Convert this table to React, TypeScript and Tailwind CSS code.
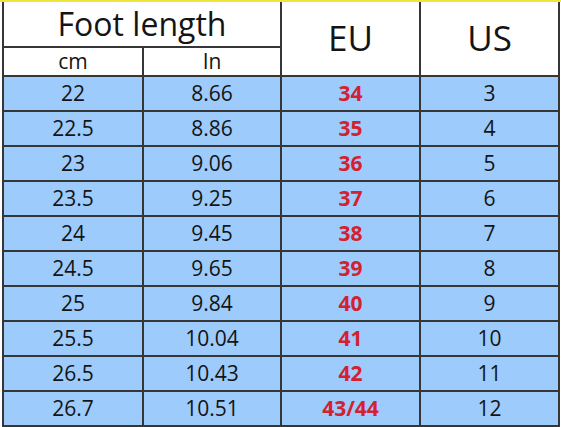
import React from "react";

// Shoe size conversion chart
const rows = [
  { cm: "22", inch: "8.66", eu: "34", us: "3" },
  { cm: "22.5", inch: "8.86", eu: "35", us: "4" },
  { cm: "23", inch: "9.06", eu: "36", us: "5" },
  { cm: "23.5", inch: "9.25", eu: "37", us: "6" },
  { cm: "24", inch: "9.45", eu: "38", us: "7" },
  { cm: "24.5", inch: "9.65", eu: "39", us: "8" },
  { cm: "25", inch: "9.84", eu: "40", us: "9" },
  { cm: "25.5", inch: "10.04", eu: "41", us: "10" },
  { cm: "26.5", inch: "10.43", eu: "42", us: "11" },
  { cm: "26.7", inch: "10.51", eu: "43/44", us: "12" },
];

const cell = "flex items-center justify-center bg-[#9dcbfb] text-[21px] text-[#141414]";

export default function App() {
  return (
    <div
      className="w-[561px] h-[427px] bg-white overflow-hidden flex flex-col"
      style={{ fontFamily: '"Open Sans", "Noto Sans", sans-serif' }}
    >
      <div className="h-[2px] bg-[#f2e43c]" />
      <div className="ml-[2px] w-[558px] grid grid-cols-[138px_136px_137px_137px] grid-rows-[44px_27px_repeat(10,33px)] gap-[2px] bg-[#363636] border-x-2 border-b-2 border-[#363636]">
        <div className="col-span-2 bg-white flex items-center justify-center text-[32px] text-[#141414]">
          Foot length
        </div>
        <div className="row-span-2 bg-white flex items-center justify-center text-[35px] text-[#141414]">
          EU
        </div>
        <div className="row-span-2 bg-white flex items-center justify-center text-[35px] text-[#141414]">
          US
        </div>
        <div className="bg-white flex items-center justify-center text-[21px] text-[#141414]">cm</div>
        <div className="bg-white flex items-center justify-center text-[21px] text-[#141414]">In</div>

        {rows.map((r) => (
          <React.Fragment key={r.cm}>
            <div className={cell}>{r.cm}</div>
            <div className={cell}>{r.inch}</div>
            <div className="flex items-center justify-center bg-[#9dcbfb] text-[21px] font-bold text-[#d3212f]">
              {r.eu}
            </div>
            <div className={cell}>{r.us}</div>
          </React.Fragment>
        ))}
      </div>
    </div>
  );
}
